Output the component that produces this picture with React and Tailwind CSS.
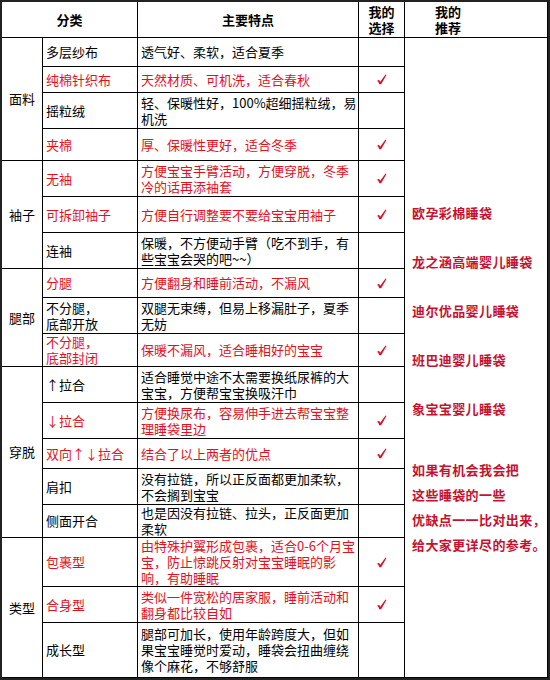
import React from "react";

const RED = "text-[#e3101e]";

// 每组: 分类名 + 子项
const GROUPS = [
  {
    name: "面料",
    rows: [
      { sub: ["多层纱布"], desc: ["透气好、柔软，适合夏季"] },
      { sub: ["纯棉针织布"], desc: ["天然材质、可机洗，适合春秋"], red: true, check: true },
      { sub: ["摇粒绒"], desc: ["轻、保暖性好，100%超细摇粒绒，易", "机洗"] },
      { sub: ["夹棉"], desc: ["厚、保暖性更好，适合冬季"], red: true, check: true },
    ],
  },
  {
    name: "袖子",
    rows: [
      { sub: ["无袖"], desc: ["方便宝宝手臂活动，方便穿脱，冬季", "冷的话再添袖套"], red: true, check: true },
      { sub: ["可拆卸袖子"], desc: ["方便自行调整要不要给宝宝用袖子"], red: true, check: true },
      { sub: ["连袖"], desc: ["保暖，不方便动手臂（吃不到手，有", "些宝宝会哭的吧~~）"] },
    ],
  },
  {
    name: "腿部",
    rows: [
      { sub: ["分腿"], desc: ["方便翻身和睡前活动，不漏风"], red: true, check: true },
      { sub: ["不分腿，", "底部开放"], desc: ["双腿无束缚，但易上移漏肚子，夏季", "无妨"] },
      { sub: ["不分腿，", "底部封闭"], desc: ["保暖不漏风，适合睡相好的宝宝"], red: true, check: true },
    ],
  },
  {
    name: "穿脱",
    rows: [
      { sub: ["↑拉合"], desc: ["适合睡觉中途不太需要换纸尿裤的大", "宝宝，方便帮宝宝换吸汗巾"] },
      { sub: ["↓拉合"], desc: ["方便换尿布，容易伸手进去帮宝宝整", "理睡袋里边"], red: true, check: true },
      { sub: ["双向↑↓拉合"], desc: ["结合了以上两者的优点"], red: true, check: true },
      { sub: ["肩扣"], desc: ["没有拉链，所以正反面都更加柔软，", "不会搁到宝宝"] },
      { sub: ["侧面开合"], desc: ["也是因没有拉链、拉头，正反面更加", "柔软"] },
    ],
  },
  {
    name: "类型",
    rows: [
      { sub: ["包裹型"], desc: ["由特殊护翼形成包裹，适合0-6个月宝", "宝，防止惊跳反射对宝宝睡眠的影", "响，有助睡眠"], red: true, check: true },
      { sub: ["合身型"], desc: ["类似一件宽松的居家服，睡前活动和", "翻身都比较自如"], red: true, check: true },
      { sub: ["成长型"], desc: ["腿部可加长，使用年龄跨度大，但如", "果宝宝睡觉时爱动，睡袋会扭曲缠绕", "像个麻花，不够舒服"] },
    ],
  },
];

const RECOMMEND = ["欧孕彩棉睡袋", "龙之涵高端婴儿睡袋", "迪尔优品婴儿睡袋", "班巴迪婴儿睡袋", "象宝宝婴儿睡袋"];

const Check = () => (
  <svg width="11" height="11" viewBox="0 0 12 12">
    <polygon points="0.5,7.8 3.2,6.4 4.6,8.4 10.4,0.6 11.4,1.2 5.6,11.2 3.6,11.2 2.2,8" fill="#d8102a" />
  </svg>
);

const Lines = ({ lines }) => (
  <div>
    {lines.map((l, i) => (
      <div key={i}>{l}</div>
    ))}
  </div>
);

const cell = "border-r border-b border-black flex items-center";

const App = () => {
  return (
    <div className="w-[550px] h-[680px] bg-white font-['Noto_Sans_CJK_SC','Noto_Sans',sans-serif] text-[13px] leading-[16px] text-black">
      <div className="grid grid-cols-[41px_95px_221px_46px_143px] grid-rows-[36px_29px_26px_36px_32px_36px_36px_36px_29px_36px_33px_36px_36px_30px_36px_33px_49px_36px_55px] border-2 border-[#222] w-[550px] h-[680px]">
        {/* 表头 */}
        <div className={`${cell} col-span-2 justify-center font-bold`}>分类</div>
        <div className={`${cell} justify-center font-bold`}>主要特点</div>
        <div className={`${cell} justify-center font-bold leading-[16px] text-center`}>
          我的
          <br />
          选择
        </div>
        <div className={`${cell} items-start pt-[2px] pl-[30px] font-bold leading-[16px]`}>
          我的
          <br />
          推荐
        </div>

        {GROUPS.map((g, gi) => (
          <React.Fragment key={g.name}>
            <div
              className={`${cell} col-start-1 justify-center ${
                g.rows.length === 4 ? "row-span-4" : g.rows.length === 3 ? "row-span-3" : "row-span-5"
              }`}
            >
              {g.name}
            </div>
            {g.rows.map((r, ri) => (
              <React.Fragment key={ri}>
                <div className={`${cell} pl-[3px] ${r.red ? RED : ""}`}>
                  <Lines lines={r.sub} />
                </div>
                <div className={`${cell} pl-[3px] ${r.red ? RED : ""}`}>
                  <Lines lines={r.desc} />
                </div>
                <div className={`${cell} justify-center`}>{r.check && <Check />}</div>
                {gi === 0 && ri === 0 && (
                  <div className="row-span-18 border-r border-b border-black pl-[7px] pt-[162px] text-[13px] tracking-[0.4px] leading-[25px] font-bold text-[#c41230] whitespace-nowrap overflow-hidden">
                    {RECOMMEND.map((t, i) => (
                      <div key={t} className={i === RECOMMEND.length - 1 ? "mb-[36px]" : "mb-[24px]"}>
                        {t}
                      </div>
                    ))}
                    <div>如果有机会我会把</div>
                    <div>这些睡袋的一些</div>
                    <div>优缺点一一比对出来，</div>
                    <div>给大家更详尽的参考。</div>
                  </div>
                )}
              </React.Fragment>
            ))}
          </React.Fragment>
        ))}
      </div>
    </div>
  );
};

export default App;
